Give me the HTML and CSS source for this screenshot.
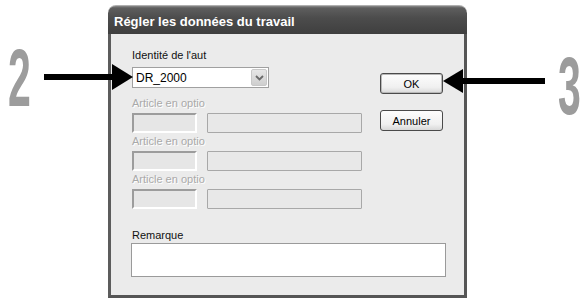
FILE: index.html
```html
<!DOCTYPE html>
<html lang="fr">
<head>
    <meta charset="UTF-8">
    <meta name="viewport" content="width=device-width, initial-scale=1.0">
    <title>Régler les données du travail</title>
    <link rel="stylesheet" href="styles.css">
</head>
<body>
    <div class="page">
        <div class="dialog">
            <div class="titlebar">Régler les données du travail</div>
            <div class="content">
                <div class="top">
                    <div class="fields">
                        <label class="label">Identité de l'aut</label>
                        <div class="combo">
                            <span class="combo-text">DR_2000</span>
                            <span class="combo-btn">
                                <svg width="9" height="6" viewBox="0 0 9 6"><path d="M1 1 L4.5 4.5 L8 1" fill="none" stroke="#6a6a6a" stroke-width="1.8"/></svg>
                            </span>
                        </div>

                        <div class="option">
                            <div class="label disabled">Article en optio</div>
                            <div class="option-row">
                                <div class="box-small"></div>
                                <div class="box-large"></div>
                            </div>
                        </div>
                        <div class="option">
                            <div class="label disabled">Article en optio</div>
                            <div class="option-row">
                                <div class="box-small"></div>
                                <div class="box-large"></div>
                            </div>
                        </div>
                        <div class="option">
                            <div class="label disabled">Article en optio</div>
                            <div class="option-row">
                                <div class="box-small"></div>
                                <div class="box-large"></div>
                            </div>
                        </div>
                    </div>
                    <div class="buttons">
                        <button class="btn btn-default">OK</button>
                        <button class="btn">Annuler</button>
                    </div>
                </div>
                <div class="remark">
                    <label class="label">Remarque</label>
                    <div class="remark-box"></div>
                </div>
            </div>
        </div>

        <!-- repères de l'illustration -->
        <span class="step step-2">2</span>
        <span class="step step-3">3</span>
        <svg class="arrows" width="584" height="301" viewBox="0 0 584 301">
            <rect x="44" y="74" width="72" height="6" fill="#000"/>
            <polygon points="112,64 133,77 112,90" fill="#000"/>
            <rect x="461" y="78" width="84" height="6" fill="#000"/>
            <polygon points="463,69 443,81 463,93" fill="#000"/>
        </svg>
    </div>
</body>
</html>
```

FILE: styles.css
```css
body {
    margin: 0;
    padding: 0;
    background-color: #fff;
    font-family: "Liberation Sans", Arial, sans-serif;
}

.page {
    position: relative;
    width: 584px;
    height: 301px;
    overflow: hidden;
}

.dialog {
    margin-left: 108px;
    padding-top: 5px;
    width: 359px;
}

.titlebar {
    height: 29px;
    box-sizing: border-box;
    padding: 3px 0 0 6px;
    line-height: 26px;
    font-size: 13px;
    font-weight: bold;
    color: #fff;
    border-radius: 8px 8px 0 0;
    background: linear-gradient(#8a8a8a 0px, #5e5e5e 2px, #4c4c4c 12px, #3e3e3e 29px);
    border-top: 1px solid #b0b0b0;
}

.content {
    height: 264px;
    box-sizing: border-box;
    background-color: #ebebeb;
    border: 3px solid #555;
    border-top: none;
    border-left-color: #5c5c5c;
    padding: 15px 0 0 21px;
}

.top {
    display: flex;
}

.fields {
    width: 248px;
}

.label {
    display: block;
    font-size: 11px;
    line-height: 13px;
    color: #111;
}

.label.disabled {
    color: #a9a9a9;
    text-shadow: 1px 1px 0 #fff;
}

.combo {
    margin-top: 5px;
    width: 137px;
    height: 21px;
    box-sizing: border-box;
    border: 1px solid #a0a0a0;
    background-color: #fff;
    display: flex;
    align-items: center;
    justify-content: space-between;
    padding: 0 1px 0 3px;
}

.combo-text {
    font-size: 12px;
    color: #000;
}

.combo-btn {
    width: 16px;
    height: 17px;
    border-radius: 2px;
    background: linear-gradient(#e6e6e6, #cfcfcf);
    border: 1px solid #c8c8c8;
    box-sizing: border-box;
    display: flex;
    align-items: center;
    justify-content: center;
}

.option {
    margin-top: 2px;
}

.fields .combo + .option {
    margin-top: 9px;
}

.option-row {
    margin-top: 3px;
    display: flex;
    gap: 10px;
}

.box-small {
    width: 65px;
    height: 20px;
    box-sizing: border-box;
    border-top: 2px solid #9c9c9c;
    border-left: 2px solid #9c9c9c;
    border-right: 2px solid #fff;
    border-bottom: 2px solid #fff;
    background-color: #e6e6e6;
}

.box-large {
    width: 155px;
    height: 20px;
    box-sizing: border-box;
    border: 1px solid #a8a8a8;
    border-radius: 1px;
    background-color: #e8e8e8;
}

.buttons {
    margin-top: 24px;
    display: flex;
    flex-direction: column;
    gap: 16px;
}

.btn {
    width: 63px;
    height: 21px;
    box-sizing: border-box;
    padding: 0;
    font-family: "Liberation Sans", Arial, sans-serif;
    font-size: 11px;
    color: #000;
    border: 1px solid #4a4a4a;
    border-radius: 3px;
    background: linear-gradient(#fdfdfd, #f0f0f0 70%, #d8d8d8);
}

.btn-default {
    box-shadow: inset 0 0 0 1px #b8b8b8;
}

.remark {
    margin-top: 20px;
    margin-left: -1px;
}

.remark .label {
    margin-left: 1px;
}

.remark-box {
    margin-top: 1px;
    width: 315px;
    height: 34px;
    box-sizing: border-box;
    border: 1px solid #9a9a9a;
    background-color: #fff;
}

.step {
    position: absolute;
    font-size: 82px;
    line-height: 1;
    font-weight: bold;
    color: #9c9c9c;
    transform: scaleX(0.5);
    transform-origin: left top;
}

.step-2 {
    left: 8px;
    top: 37px;
}

.step-3 {
    left: 558px;
    top: 45px;
}

.arrows {
    position: absolute;
    left: 0;
    top: 0;
    pointer-events: none;
}
```
